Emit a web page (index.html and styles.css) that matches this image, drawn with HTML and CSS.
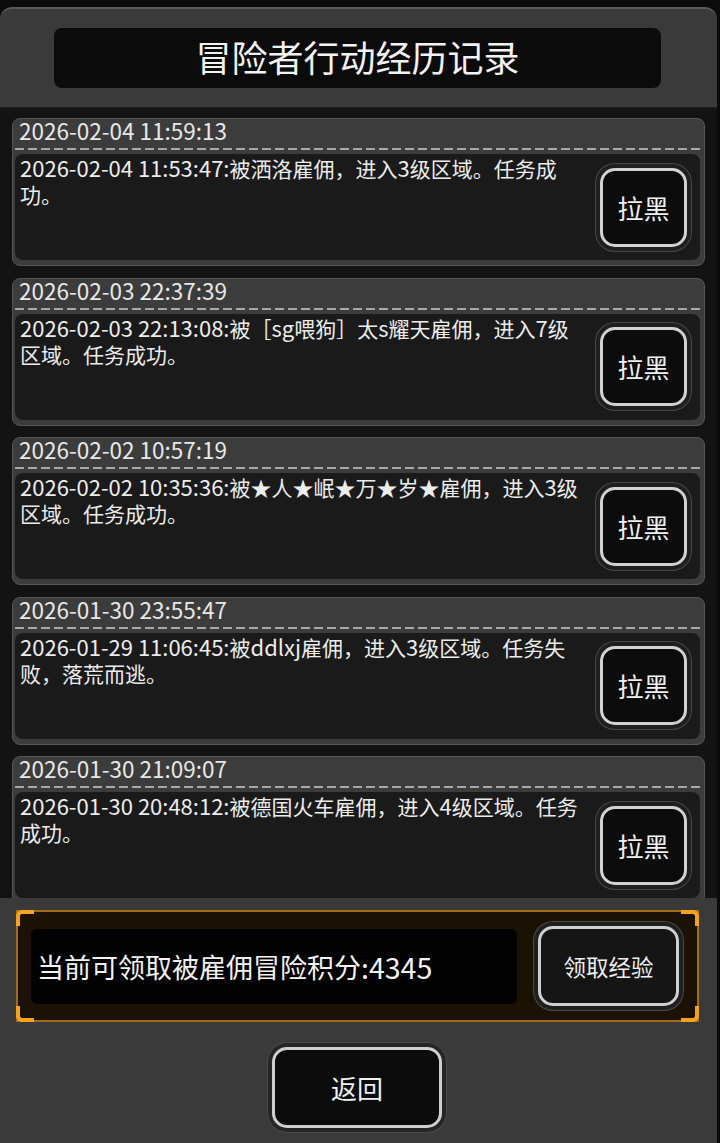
FILE: index.html
```html
<!DOCTYPE html>
<html lang="zh">
<head>
<meta charset="utf-8">
<link rel="stylesheet" href="styles.css">
</head>
<body>
<div class="panel">
  <div class="top">
    <div class="title">冒险者行动经历记录</div>
  </div>
  <div class="list">
    <div class="card">
      <div class="head">2026-02-04 11:59:13</div>
      <div class="dash"></div>
      <div class="body">
        <div class="text"><span class="n">2026-02-04 11:53:47:</span>被洒洛雇佣，进入<span class="n">3</span>级区域。任务成功。</div>
        <div class="btn">拉黑</div>
      </div>
    </div>
    <div class="card">
      <div class="head">2026-02-03 22:37:39</div>
      <div class="dash"></div>
      <div class="body">
        <div class="text"><span class="n">2026-02-03 22:13:08:</span>被［<span class="n">sg</span>喂狗］太<span class="n">s</span>耀天雇佣，进入<span class="n">7</span>级区域。任务成功。</div>
        <div class="btn">拉黑</div>
      </div>
    </div>
    <div class="card">
      <div class="head">2026-02-02 10:57:19</div>
      <div class="dash"></div>
      <div class="body">
        <div class="text"><span class="n">2026-02-02 10:35:36:</span>被★人★岷★万★岁★雇佣，进入<span class="n">3</span>级区域。任务成功。</div>
        <div class="btn">拉黑</div>
      </div>
    </div>
    <div class="card">
      <div class="head">2026-01-30 23:55:47</div>
      <div class="dash"></div>
      <div class="body">
        <div class="text"><span class="n">2026-01-29 11:06:45:</span>被<span class="n">ddlxj</span>雇佣，进入<span class="n">3</span>级区域。任务失败，落荒而逃。</div>
        <div class="btn">拉黑</div>
      </div>
    </div>
    <div class="card">
      <div class="head">2026-01-30 21:09:07</div>
      <div class="dash"></div>
      <div class="body">
        <div class="text"><span class="n">2026-01-30 20:48:12:</span>被德国火车雇佣，进入<span class="n">4</span>级区域。任务成功。</div>
        <div class="btn">拉黑</div>
      </div>
    </div>
  </div>
  <div class="bottom">
    <div class="claim">
      <span class="c tl"></span><span class="c tr"></span><span class="c bl"></span><span class="c br"></span>
      <div class="points">当前可领取被雇佣冒险积分<span class="pn">:4345</span></div>
      <div class="claim-btn">领取经验</div>
    </div>
    <div class="back">返回</div>
  </div>
</div>
</body>
</html>
```

FILE: styles.css
```css
* { box-sizing: border-box; }
html, body {
  margin: 0;
  padding: 0;
  background: #0b0b0b;
  font-family: "Noto Sans CJK SC", "Noto Sans", sans-serif;
  color: #ececec;
}
.panel {
  margin-top: 7px;
  width: 717px;
  height: 1136px;
  background: #3a3a3a;
  border-top: 2px solid #585858;
  border-radius: 12px 12px 0 0;
  display: flex;
  flex-direction: column;
  overflow: hidden;
}
.top {
  height: 98px;
  padding: 19px 56px 19px 54px;
}
.title {
  height: 60px;
  background: #0b0b0b;
  border-radius: 8px;
  font-size: 36px;
  line-height: 56px;
  text-align: center;
  color: #f2f2f2;
}
.list {
  height: 791px;
  overflow: hidden;
  background: #131313;
  padding: 10px 12px 0 12px;
  border-top: 1px solid #202020;
}
.card {
  background: #3c3c3c;
  border: 1px solid #575757;
  border-radius: 8px;
  padding: 0 4px 5px 2px;
  margin-bottom: 11.5px;
}
.head {
  height: 29px;
  padding-left: 4px;
  font-size: 22.5px;
  line-height: 23px;
  color: #e8e8e8;
}
.dash {
  height: 2px;
  margin-bottom: 4px;
  background: repeating-linear-gradient(90deg, #a8a8a8 0 9px, transparent 9px 13px);
}
.body {
  height: 106px;
  background: #1a1a1a;
  border-radius: 8px;
  display: flex;
  align-items: center;
}
.text {
  align-self: flex-start;
  width: 572px;
  padding: 1px 0 0 5px;
  font-size: 21px;
  line-height: 26px;
  color: #ececec;
}
.n { font-size: 22px; line-height: 1; }
.btn {
  margin-left: auto;
  margin-right: 13px;
  width: 87px;
  height: 79px;
  border: 3px solid #d2d2d2;
  border-radius: 15px;
  background: #0c0c0c;
  box-shadow: 0 0 0 4px #1f1f1f, 0 0 0 5px #474747;
  display: flex;
  align-items: center;
  justify-content: center;
  font-size: 26px;
  color: #f0f0f0;
}
.bottom {
  flex: 1;
  padding: 12px 18px 0 16px;
}
.claim {
  position: relative;
  height: 112px;
  border: 2px solid #a26c12;
  background: #1b1104;
  display: flex;
  align-items: center;
}
.c {
  position: absolute;
  width: 18px;
  height: 16px;
  border: 0 solid #f4a41c;
}
.tl { top: -2px; left: -2px; border-top-width: 4px; border-left-width: 4px; border-top-left-radius: 6px; }
.tr { top: -2px; right: -2px; border-top-width: 4px; border-right-width: 4px; border-top-right-radius: 6px; }
.bl { bottom: -2px; left: -2px; border-bottom-width: 4px; border-left-width: 4px; border-bottom-left-radius: 6px; }
.br { bottom: -2px; right: -2px; border-bottom-width: 4px; border-right-width: 4px; border-bottom-right-radius: 6px; }
.points {
  margin-left: 13px;
  width: 486px;
  height: 75px;
  background: #020202;
  border-radius: 6px;
  display: flex;
  align-items: center;
  padding-left: 6px;
  font-size: 27px;
  color: #f2f2f2;
}
.pn { font-size: 28.5px; }
.claim-btn {
  margin-left: 21px;
  width: 141px;
  height: 80px;
  border: 3px solid #cfcfcf;
  border-radius: 15px;
  background: #151515;
  box-shadow: 0 0 0 4px #1f1f1f, 0 0 0 5px #4a4a4a;
  display: flex;
  align-items: center;
  justify-content: center;
  font-size: 22.5px;
  color: #eeeeee;
}
.back {
  margin: 25px 0 0 256px;
  width: 170px;
  height: 81px;
  border: 3px solid #cfcfcf;
  border-radius: 15px;
  background: #0c0c0c;
  box-shadow: 0 0 0 4px #262626, 0 0 0 5px #4a4a4a;
  display: flex;
  align-items: center;
  justify-content: center;
  font-size: 26px;
  color: #f0f0f0;
}
```
